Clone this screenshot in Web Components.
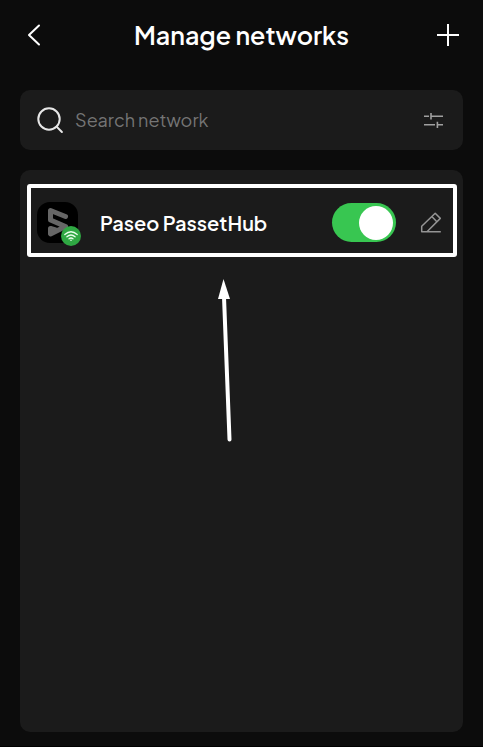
<!DOCTYPE html>
<html lang="en">
<head>
<meta charset="utf-8">
<meta name="viewport" content="width=device-width, initial-scale=1">
<title>Manage networks</title>
<style>
  html { height: 100%; }
  body {
    margin: 0;
    min-height: 100%;
    display: flex;
    background: #0c0c0c;
    color: #fff;
    font-family: "Plus Jakarta Sans", Inter, "Liberation Sans", sans-serif;
  }
</style>
</head>
<body>
<networks-page></networks-page>
<script>
const reset = `
  *, *::before, *::after { box-sizing: border-box; }
  button { margin: 0; padding: 0; border: 0; background: none; color: inherit; cursor: pointer;
    display: flex; align-items: center; justify-content: center; }
  svg { display: block; fill: none; stroke: currentColor; }
`;

class ViewElement extends HTMLElement {
  connectedCallback() {
    if (this.shadowRoot) return;
    const root = this.attachShadow({ mode: "open" });
    root.innerHTML = `<style>${reset}${this.css()}</style>${this.html()}`;
  }
}

customElements.define("page-header", class extends ViewElement {
  css() { return `
    :host { display: block; }
    header { display: grid; grid-template-columns: 30px 1fr 30px; align-items: center; height: 70px; padding: 0 20px; }
    h1 { margin: 0; text-align: center; font-size: 25px; line-height: 32px; font-weight: 600; }
    button { width: 30px; height: 30px; }
  `; }
  html() { return `
    <header>
      <button type="button" aria-label="Back">
        <svg width="30" height="30" viewBox="0 0 30 30" stroke-width="2" stroke-linecap="round" stroke-linejoin="round"><path d="M19 5.500 9 15l10 9.500"/></svg>
      </button>
      <h1><slot></slot></h1>
      <button type="button" aria-label="Add network">
        <svg width="30" height="30" viewBox="0 0 30 30" stroke-width="2"><path d="M4 15h22M15 4v22"/></svg>
      </button>
    </header>`; }
});

customElements.define("search-box", class extends ViewElement {
  css() { return `
    :host { display: block; }
    form { display: flex; align-items: center; gap: 10px; height: 60px; padding: 0 15px; background: #1b1b1b; border-radius: 10px; }
    label { flex: none; color: #e6e6e6; }
    input { flex: 1; min-width: 0; height: 30px; padding: 0 0 2px; border: 0; outline: 0; background: none;
      color: #fff; font: 400 18px/24px "Plus Jakarta Sans", Inter, "Liberation Sans", sans-serif; }
    input::placeholder { color: #757575; opacity: 1; }
    button { width: 30px; height: 30px; color: #a0a0a0; }
  `; }
  html() { return `
    <form role="search">
      <label for="query" aria-label="Search network">
        <svg width="30" height="30" viewBox="0 0 30 30" stroke-width="2" stroke-linecap="round"><circle cx="14" cy="14" r="10.7"/><path d="m21.600 21.600 5.300 5.400"/></svg>
      </label>
      <input id="query" type="text" placeholder="Search network">
      <button type="button" aria-label="Filter">
        <svg width="30" height="30" viewBox="0 0 30 30" stroke-width="1.600"><path d="M6 11.200h5M13.500 11.200h11.500M13 8v6.500M6 19.700h11M20 19.700h5M19.400 16.700v6.300"/></svg>
      </button>
    </form>`; }
});

customElements.define("network-logo", class extends ViewElement {
  css() { return `
    :host { display: block; position: relative; width: 41px; height: 41px; }
    .badge { position: absolute; right: -3px; bottom: -3px; }
  `; }
  html() { return `
    <svg width="41" height="41" viewBox="0 0 41 41" aria-hidden="true">
      <rect width="41" height="41" rx="13" fill="#000" stroke="none"/>
      <path d="M28.500 14.500 13.500 8.500V18l15 6.500-15 7.500v-5.500l5 1.500" stroke="#666" stroke-width="5" stroke-linejoin="round" stroke-linecap="round"/>
    </svg>
    <svg class="badge" width="20" height="20" viewBox="0 0 20 20" aria-hidden="true">
      <circle cx="10" cy="10" r="10" fill="#2fa843" stroke="none"/>
      <g stroke="#e9ffec" stroke-width="1.300" stroke-linecap="round">
        <path d="M3.800 8.600Q10 2.900 16.200 8.600M5.900 10.800Q10 7.200 14.100 10.800M8 12.800Q10 11.200 12 12.800"/>
      </g>
      <circle cx="10" cy="14.300" r=".8" fill="#e9ffec" stroke="none"/>
    </svg>`; }
});

customElements.define("toggle-switch", class extends ViewElement {
  css() { return `
    :host { display: block; }
    input { appearance: none; display: flex; align-items: center; width: 64px; height: 39px; margin: 0; padding: 0 3px;
      border-radius: 20px; background: #484848; cursor: pointer; }
    input::before { content: ""; width: 34px; height: 34px; border-radius: 50%; background: #fff; }
    input:checked { justify-content: flex-end; background: #38c651; }
  `; }
  html() { return `<input type="checkbox" role="switch" aria-label="${this.getAttribute("label")}" checked>`; }
});

customElements.define("network-row", class extends ViewElement {
  css() { return `
    :host { display: flex; align-items: center; height: 73px; padding: 4px 7px 0 6px; border: 4px solid #fff; border-radius: 3px; }
    .name { flex: 1; min-width: 0; margin-left: 22px; font-size: 20px; line-height: 26px; font-weight: 600; white-space: nowrap; }
    button { width: 30px; height: 30px; margin-left: 20px; color: #949494; }
  `; }
  html() { return `
    <network-logo></network-logo>
    <span class="name"><slot></slot></span>
    <toggle-switch label="${this.textContent.trim()}"></toggle-switch>
    <button type="button" aria-label="Edit network">
      <svg width="30" height="30" viewBox="0 0 30 30" stroke-width="1.500" stroke-linejoin="round"><path d="M5.700 23.700v-5.400L19.200 5.200l5.100 5.200-13.300 13.300zM15.800 8.500l5.100 5.200M11 23.700h13.800"/></svg>
    </button>`; }
});

customElements.define("pointer-arrow", class extends ViewElement {
  css() { return `:host { display: block; }`; }
  html() { return `
    <svg width="16" height="164" viewBox="0 0 16 164" aria-hidden="true">
      <path d="M7 18 12.500 160.500" stroke="#fff" stroke-width="4" stroke-linecap="round"/>
      <path d="M6.500 0 13 20H1z" fill="#fff" stroke="none"/>
    </svg>`; }
});

customElements.define("network-list", class extends ViewElement {
  css() { return `
    :host { display: block; position: relative; padding: 14px 6px 14px 7px; background: #1b1b1b; border-radius: 10px; }
    pointer-arrow { position: absolute; left: 197px; top: 109px; }
  `; }
  html() { return `<slot></slot><pointer-arrow></pointer-arrow>`; }
});

customElements.define("networks-page", class extends ViewElement {
  css() { return `
    :host { flex: 1; min-width: 0; display: flex; flex-direction: column; border-bottom: 1px solid #000; }
    main { flex: 1; display: flex; flex-direction: column; gap: 20px; padding: 20px 20px 14px; }
    network-list { flex: 1; }
  `; }
  html() { return `
    <page-header>Manage networks</page-header>
    <main>
      <search-box></search-box>
      <network-list>
        <network-row>Paseo PassetHub</network-row>
      </network-list>
    </main>`; }
});
</script>
</body>
</html>
